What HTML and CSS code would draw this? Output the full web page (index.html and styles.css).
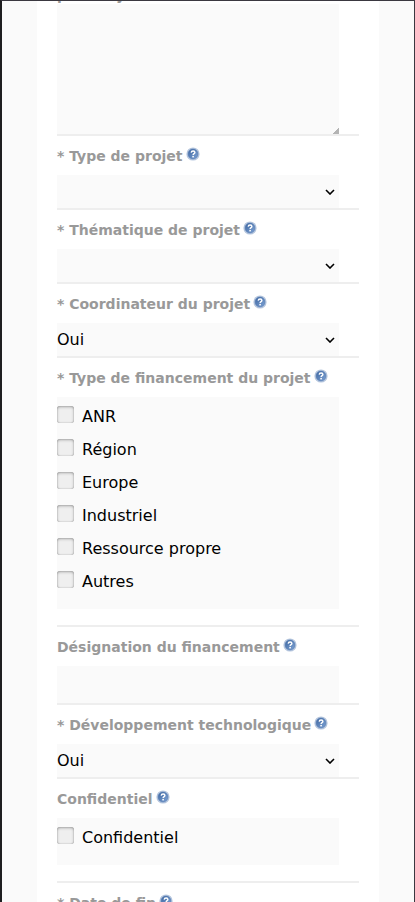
FILE: index.html
```html
<!DOCTYPE html>
<html lang="fr">
<head>
<meta charset="utf-8">
<meta name="viewport" content="width=device-width, initial-scale=1">
<title>Projet</title>
<link rel="stylesheet" href="styles.css">
</head>
<body>
<svg class="sprite" aria-hidden="true">
  <defs>
    <linearGradient id="blue" x1="0" y1="0" x2="1" y2="1">
      <stop offset="0" stop-color="#3c659f"/><stop offset="1" stop-color="#7fa4d6"/>
    </linearGradient>
    <symbol id="help" viewBox="0 0 16 16">
      <circle cx="8" cy="8" r="6.6" fill="#b4c5dd"/>
      <circle cx="8" cy="8" r="4.900" fill="url(#blue)" stroke="#5379b0" stroke-width=".6"/>
      <path d="M6.200 6.600C6.300 5.500 7.100 5 8.100 5C9.200 5 9.900 5.600 9.900 6.400C9.900 7.600 8.100 7.700 8.100 9.100" fill="none" stroke="#fff" stroke-width="1.400"/>
      <rect x="7.300" y="9.900" width="1.600" height="1.500" fill="#fff"/>
    </symbol>
  </defs>
</svg>
<div class="frame">
  <form class="panel">
    <div class="field first">
      <label class="title" for="desc">pour objet</label>
      <textarea id="desc" class="control"></textarea>
    </div>
    <div class="field">
      <label class="title" for="type">* Type de projet<svg class="help"><use href="#help"/></svg></label>
      <select id="type" class="control"><option></option></select>
    </div>
    <div class="field">
      <label class="title" for="theme">* Thématique de projet<svg class="help"><use href="#help"/></svg></label>
      <select id="theme" class="control"><option></option></select>
    </div>
    <div class="field">
      <label class="title" for="coord">* Coordinateur du projet<svg class="help"><use href="#help"/></svg></label>
      <select id="coord" class="control"><option>Oui</option><option>Non</option></select>
    </div>
    <div class="field group" role="group" aria-labelledby="fin">
      <div class="title" id="fin">* Type de financement du projet<svg class="help"><use href="#help"/></svg></div>
      <div class="control options">
        <label class="option"><input type="checkbox">ANR</label>
        <label class="option"><input type="checkbox">Région</label>
        <label class="option"><input type="checkbox">Europe</label>
        <label class="option"><input type="checkbox">Industriel</label>
        <label class="option"><input type="checkbox">Ressource propre</label>
        <label class="option"><input type="checkbox">Autres</label>
      </div>
    </div>
    <div class="field">
      <label class="title" for="desig">Désignation du financement<svg class="help"><use href="#help"/></svg></label>
      <input type="text" id="desig" class="control">
    </div>
    <div class="field">
      <label class="title" for="dev">* Développement technologique<svg class="help"><use href="#help"/></svg></label>
      <select id="dev" class="control"><option>Oui</option><option>Non</option></select>
    </div>
    <div class="field group" role="group" aria-labelledby="conf">
      <div class="title" id="conf">Confidentiel<svg class="help"><use href="#help"/></svg></div>
      <div class="control options">
        <label class="option"><input type="checkbox">Confidentiel</label>
      </div>
    </div>
    <div class="field">
      <label class="title" for="end">* Date de fin<svg class="help"><use href="#help"/></svg></label>
      <input type="text" id="end" class="control">
    </div>
  </form>
</div>
</body>
</html>
```

FILE: styles.css
```css
* { box-sizing: border-box; }

body {
  margin: 0;
  font: 16px/20px "DejaVu Sans", sans-serif;
  color: #000;
}

.sprite { position: absolute; width: 0; height: 0; }

.frame {
  height: 100vh;
  overflow: hidden;
  padding: 0 35px;
  background: #fafafa;
  border: solid #3a3840;
  border-width: 1px 1px 0 2px;
  border-left-color: #1e1e20;
}

.panel {
  padding: 0 20px;
  background: #fff;
}

.field { border-bottom: 2px solid #eee; }
.field.group { padding-bottom: 16px; }
.field.first { margin-top: -26px; }

.title {
  display: block;
  height: 39px;
  padding-top: 10px;
  font-size: 14px;
  font-weight: bold;
  color: #999;
  white-space: nowrap;
}

.first .title { height: 29px; }

.help {
  width: 16px;
  height: 16px;
  margin-left: 2px;
  vertical-align: -1px;
}

.control {
  display: block;
  width: calc(100% - 20px);
  height: 33px;
  margin: 0;
  padding: 0;
  border: 0;
  border-radius: 0;
  background: #fafafa;
  color: #000;
  font: inherit;
}

select.control {
  appearance: none;
  background: #fafafa url("data:image/svg+xml,%3Csvg xmlns='http://www.w3.org/2000/svg' width='10' height='6'%3E%3Cpath d='M1 1l4 4 4-4' fill='none' stroke='%23000' stroke-width='1.600'/%3E%3C/svg%3E") no-repeat right 4px center;
}

textarea.control { height: 130px; resize: vertical; }

textarea::-webkit-resizer {
  background: linear-gradient(135deg, transparent 50%, #b4b4b4 50%) no-repeat right bottom / 6px 6px;
}

input.control { height: 37px; }

.options { height: auto; padding: 3px 0 11px; }

.option {
  display: flex;
  align-items: center;
  gap: 8px;
  height: 33px;
}

.option input {
  appearance: none;
  width: 17px;
  height: 17px;
  margin: 0 0 4px;
  border-radius: 3px;
  background: #efefef;
  box-shadow: inset 0 1px 3px rgba(0, 0, 0, .3), inset 0 0 1px rgba(0, 0, 0, .4);
}
```
